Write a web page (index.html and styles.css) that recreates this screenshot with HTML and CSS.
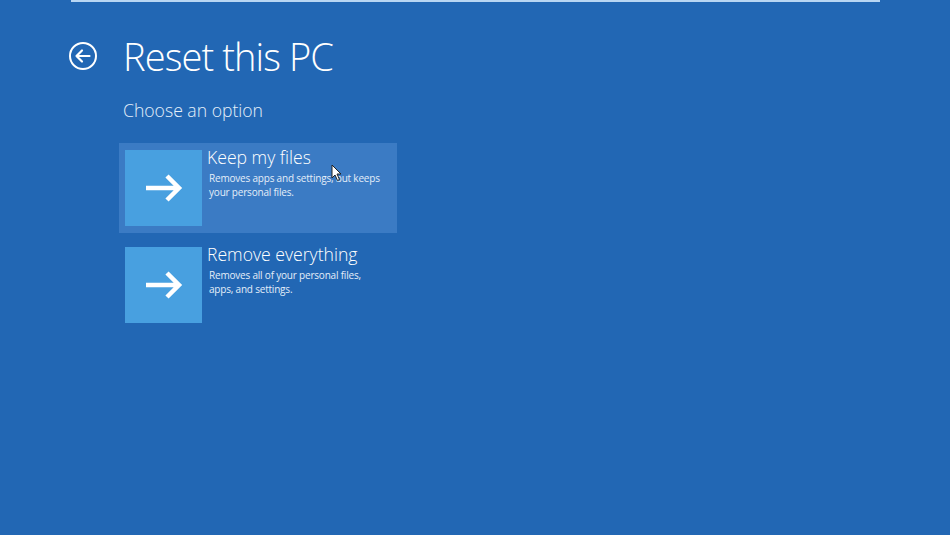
FILE: index.html
```html
<!DOCTYPE html>
<html lang="en">
<head>
  <meta charset="UTF-8">
  <title>Reset this PC</title>
  <link rel="stylesheet" href="styles.css">
</head>
<body>
  <div class="topbar"></div>
  <div class="page">
    <div class="header">
      <svg class="back" width="30" height="30" viewBox="0 0 30 30">
        <circle cx="15" cy="15" r="13" fill="none" stroke="#fff" stroke-width="2"/>
        <path d="M8.5 15 H21.5 M14 9.5 L8.5 15 L14 20.5" fill="none" stroke="#fff" stroke-width="2.2" stroke-linecap="round" stroke-linejoin="round"/>
      </svg>
      <h1>Reset this PC</h1>
    </div>
    <p class="subtitle">Choose an option</p>

    <div class="options">
      <div class="option active">
        <div class="tile">
          <svg width="40" height="30" viewBox="0 0 40 30">
            <path d="M2 15 H35 M23 3 L35 15 L23 27" fill="none" stroke="#fff" stroke-width="4.5" stroke-linejoin="miter"/>
          </svg>
        </div>
        <div class="text">
          <div class="name">Keep my files</div>
          <div class="desc">Removes apps and settings, but keeps<br>your personal files.</div>
        </div>
        <svg class="cursor" width="12" height="18" viewBox="0 0 12 18">
          <path d="M1 1 V14 L4 11 L6.5 16.5 L8.5 15.5 L6 10 H10 Z" fill="#fff" stroke="#222" stroke-width="1"/>
        </svg>
      </div>

      <div class="option">
        <div class="tile">
          <svg width="40" height="30" viewBox="0 0 40 30">
            <path d="M2 15 H35 M23 3 L35 15 L23 27" fill="none" stroke="#fff" stroke-width="4.5" stroke-linejoin="miter"/>
          </svg>
        </div>
        <div class="text">
          <div class="name">Remove everything</div>
          <div class="desc">Removes all of your personal files,<br>apps, and settings.</div>
        </div>
      </div>
    </div>
  </div>
</body>
</html>
```

FILE: styles.css
```css
body {
  margin: 0;
  width: 950px;
  height: 535px;
  overflow: hidden;
  background-color: #2267b4;
  color: #fff;
  font-family: "Open Sans", "Segoe UI", sans-serif;
}
.topbar {
  margin-left: 71px;
  width: 809px;
  height: 2px;
  background-color: #b8d6f3;
}
.page {
  padding-left: 68px;
}
.header {
  display: flex;
  align-items: center;
  margin-top: 24px;
  height: 60px;
}
.back {
  margin-right: 25px;
}
h1 {
  margin: 0;
  font-size: 38px;
  font-weight: 300;
  letter-spacing: -0.9px;
}
.subtitle {
  margin: 12px 0 0 55px;
  font-size: 17.6px;
  font-weight: 300;
  color: #e6f0fa;
}
.options {
  margin: 21px 0 0 51px;
  display: flex;
  flex-direction: column;
  gap: 7px;
}
.option {
  position: relative;
  width: 266px;
  height: 76px;
  padding: 7px 6px;
  display: flex;
  gap: 5px;
}
.option.active {
  background-color: #3b7bc4;
}
.tile {
  width: 77px;
  height: 76px;
  flex-shrink: 0;
  background-color: #48a0e0;
  display: flex;
  align-items: center;
  justify-content: center;
}
.name {
  font-size: 17.6px;
  font-weight: 300;
  line-height: 20px;
  margin-top: -3px;
}
.desc {
  margin: 4px 0 0 2px;
  font-size: 10px;
  line-height: 14px;
  letter-spacing: -0.2px;
  color: #e4eef9;
}
.cursor {
  position: absolute;
  left: 212px;
  top: 21px;
}
```
